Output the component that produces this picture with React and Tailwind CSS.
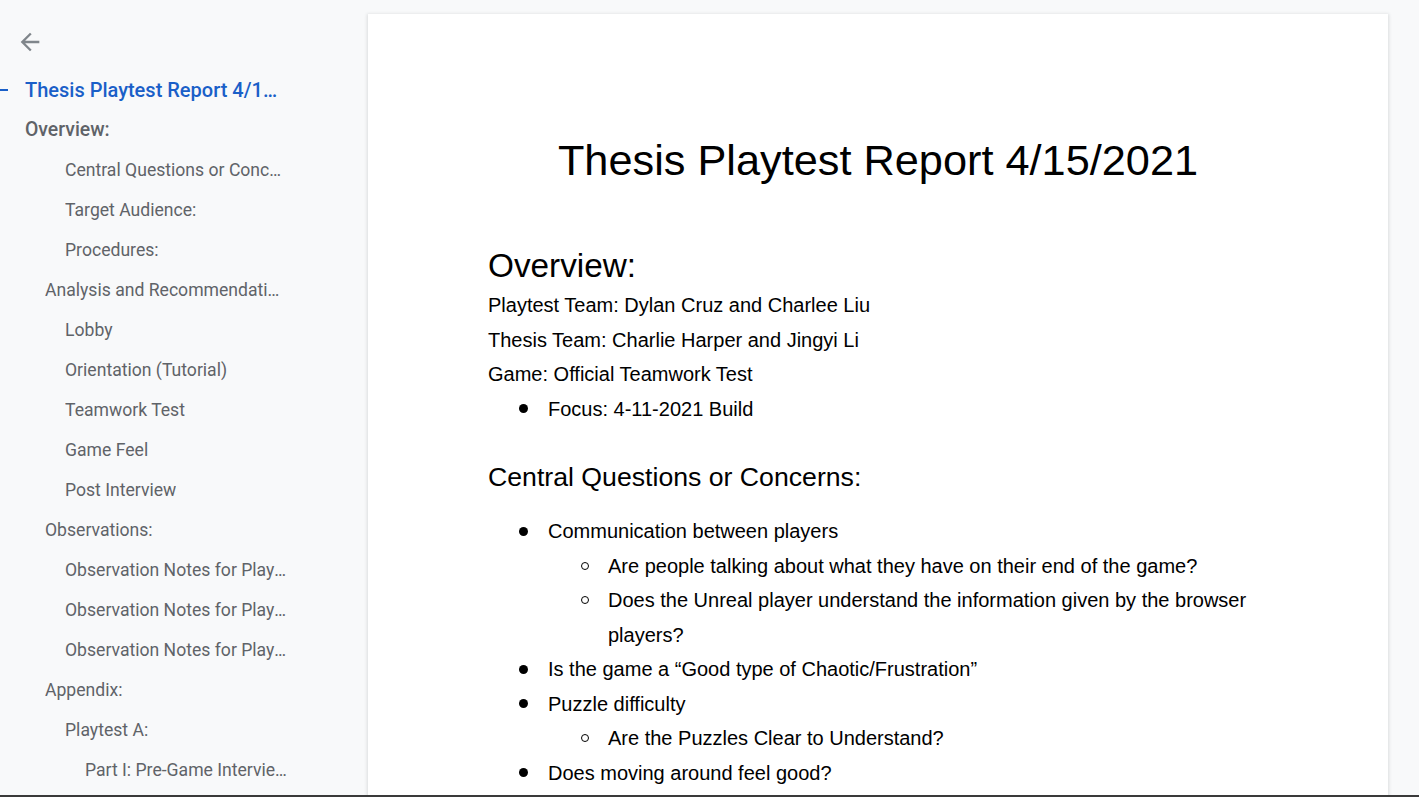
import React from 'react';

const outline = [
  { label: 'Overview:', level: 1 },
  { label: 'Central Questions or Concerns:', level: 3 },
  { label: 'Target Audience:', level: 3 },
  { label: 'Procedures:', level: 3 },
  { label: 'Analysis and Recommendations:', level: 2 },
  { label: 'Lobby', level: 3 },
  { label: 'Orientation (Tutorial)', level: 3 },
  { label: 'Teamwork Test', level: 3 },
  { label: 'Game Feel', level: 3 },
  { label: 'Post Interview', level: 3 },
  { label: 'Observations:', level: 2 },
  { label: 'Observation Notes for Playtest A', level: 3 },
  { label: 'Observation Notes for Playtest B', level: 3 },
  { label: 'Observation Notes for Playtest C', level: 3 },
  { label: 'Appendix:', level: 2 },
  { label: 'Playtest A:', level: 3 },
  { label: 'Part I: Pre-Game Interview', level: 4 }
];

const indent = {
  1: 'pl-[25px] text-[19.4px] font-medium',
  2: 'pl-[45px] text-[17.6px]',
  3: 'pl-[65px] text-[17.6px]',
  4: 'pl-[85px] text-[17.6px]'
};

const Bullet = ({ sub, children }) => (
  <div className={sub ? 'flex pl-[90px]' : 'flex pl-[30px]'}>
    <span className="flex h-[34.5px] w-[30px] shrink-0 items-center">
      {sub ? (
        <span className="ml-[3px] h-[8px] w-[8px] rounded-full border border-black" />
      ) : (
        <span className="ml-[1px] h-[9px] w-[9px] rounded-full bg-black" />
      )}
    </span>
    <span className="flex-1">{children}</span>
  </div>
);

const Sidebar = () => (
  <aside className="w-[368px] shrink-0 pt-[28px] font-['Roboto',sans-serif]">
    <button className="ml-[16px] flex h-[28px] w-[28px] items-center justify-center text-[#80868b]">
      <svg viewBox="0 0 24 24" className="h-[28px] w-[28px]" fill="currentColor">
        <path d="M20 11H7.83l5.59-5.59L12 4l-8 8 8 8 1.41-1.41L7.83 13H20v-2z" />
      </svg>
    </button>
    <nav className="mt-[14px] w-[287px]">
      <div className="relative flex h-[40px] items-center pl-[25px]">
        <span className="absolute left-0 top-1/2 h-[2px] w-[8px] -translate-y-1/2 bg-[#1a5fc8]" />
        <span className="max-w-[253px] truncate text-[20px] font-medium text-[#1a5fc8]">
          Thesis Playtest Report 4/15/2021
        </span>
      </div>
      {outline.map((item) => (
        <div
          key={item.label}
          className={`flex h-[40px] items-center text-[#5f6368] ${indent[item.level]}`}
        >
          <span className="truncate">{item.label}</span>
        </div>
      ))}
    </nav>
  </aside>
);

const Document = () => (
  <main className="mt-[14px] w-[1020px] shrink-0 bg-white px-[120px] pt-[116px] font-['Liberation_Sans',Arial,sans-serif] text-black shadow-[0_1px_3px_1px_rgba(60,64,67,0.15)]">
    <h1 className="text-center text-[43.3px] leading-[60px]">Thesis Playtest Report 4/15/2021</h1>

    <h2 className="mt-[54px] text-[33.3px] leading-[44px]">Overview:</h2>
    <div className="text-[20px] leading-[34.5px]">
      <p>Playtest Team: Dylan Cruz and Charlee Liu</p>
      <p>Thesis Team: Charlie Harper and Jingyi Li</p>
      <p>Game: Official Teamwork Test</p>
      <Bullet>Focus: 4-11-2021 Build</Bullet>
    </div>

    <h3 className="mt-[33px] text-[26.67px] leading-[36px]">Central Questions or Concerns:</h3>
    <div className="mt-[19px] text-[20px] leading-[34.5px]">
      <Bullet>Communication between players</Bullet>
      <Bullet sub>Are people talking about what they have on their end of the game?</Bullet>
      <Bullet sub>Does the Unreal player understand the information given by the browser players?</Bullet>
      <Bullet>Is the game a “Good type of Chaotic/Frustration”</Bullet>
      <Bullet>Puzzle difficulty</Bullet>
      <Bullet sub>Are the Puzzles Clear to Understand?</Bullet>
      <Bullet>Does moving around feel good?</Bullet>
      <Bullet sub>Is the movement speed appropriate?</Bullet>
    </div>
  </main>
);

export default function App() {
  return (
    <div className="relative flex h-[797px] w-full overflow-hidden bg-[#f8f9fa]">
      <Sidebar />
      <Document />
      <div className="absolute bottom-0 left-0 h-[2px] w-full bg-[#3a3a3a]" />
    </div>
  );
}
